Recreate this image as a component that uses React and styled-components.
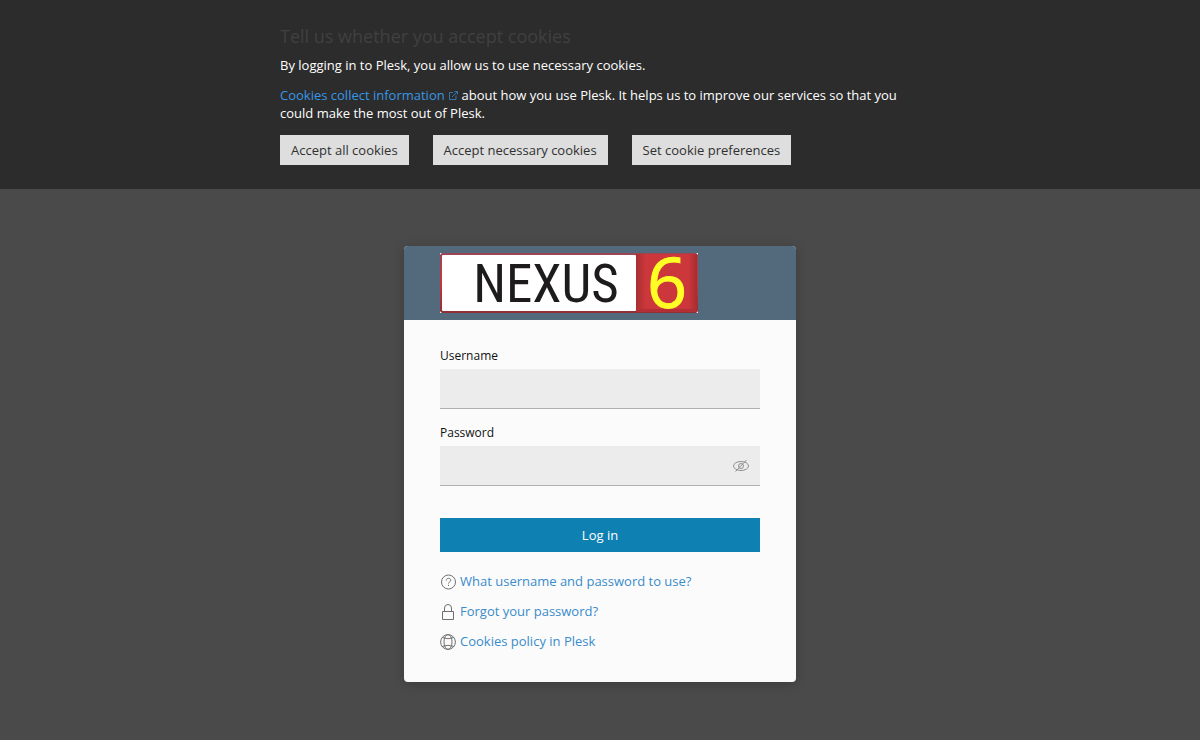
import React, { useState } from 'react';
import styled, { createGlobalStyle } from 'styled-components';

const GlobalStyle = createGlobalStyle`
  *, *::before, *::after { box-sizing: border-box; }
  body {
    margin: 0;
    background: #4a4a4a;
    color: #222;
    font: 13px/18px 'Open Sans', 'Noto Sans', sans-serif;
  }
`;

const Page = styled.div`
  min-height: 100vh;
  display: flex;
  flex-direction: column;
`;

const Banner = styled.section`
  padding: 24px;
  background: #2c2c2c;
  color: #fff;
`;

const BannerContent = styled.div`
  max-width: 640px;
  margin: 0 auto;
`;

const BannerTitle = styled.h1`
  margin: 0 0 8px;
  color: #404040;
  font-size: 18px;
  font-weight: 400;
  line-height: 24px;
`;

const Paragraph = styled.p`
  margin: 0 0 12px;
`;

const Link = styled.a`
  color: ${({ $bright }) => ($bright ? '#3797e4' : '#3a8bcb')};
  text-decoration: none;
  &:hover { text-decoration: underline; }
`;

const BannerActions = styled.div`
  display: flex;
  flex-wrap: wrap;
  gap: 24px;
  margin-top: 13px;
`;

const CookieButton = styled.button`
  height: 30px;
  padding: 0 11px;
  border: 0;
  background: #dedede;
  color: #303030;
  font: inherit;
  cursor: pointer;
`;

const Main = styled.main`
  padding: 57px 16px;
  display: flex;
  justify-content: center;
`;

const Card = styled.div`
  width: 100%;
  max-width: 392px;
  border-radius: 4px;
  overflow: hidden;
  background: #fbfbfb;
  box-shadow: 0 2px 12px rgba(0, 0, 0, 0.2);
`;

const CardHeader = styled.header`
  padding: 7px 36px;
  background: #53697c;
`;

const Logo = styled.svg`
  display: block;
  width: 258px;
  height: 60px;
  overflow: visible;
`;

const Form = styled.form`
  padding: 27px 36px 0;
`;

const Field = styled.div`
  margin-bottom: 15px;
`;

const Label = styled.label`
  display: block;
  margin-bottom: 4px;
  color: #111;
  font-size: 12px;
`;

const InputBox = styled.div`
  display: flex;
  align-items: center;
  height: 40px;
  border-bottom: 1px solid #b0b0b0;
  background: #ececec;
  &:focus-within { border-color: #0f80b2; }
`;

const Input = styled.input`
  flex: 1;
  min-width: 0;
  height: 100%;
  padding: 0 12px;
  border: 0;
  outline: 0;
  background: transparent;
  font: inherit;
`;

const RevealButton = styled.button`
  display: flex;
  padding: 0;
  margin-right: 11px;
  border: 0;
  background: transparent;
  color: #909090;
  cursor: pointer;
`;

const SubmitButton = styled.button`
  width: 100%;
  height: 34px;
  margin-top: 17px;
  border: 0;
  background: #0f80b2;
  color: #fff;
  font: inherit;
  font-weight: 500;
  cursor: pointer;
`;

const HelpList = styled.ul`
  margin: 0;
  padding: 20px 36px 32px;
  display: flex;
  flex-direction: column;
  gap: 12px;
  list-style: none;
`;

const HelpItem = styled.li`
  display: flex;
  align-items: center;
  gap: 4px;
`;

const HelpIcon = styled.svg`
  flex: none;
  width: 16px;
  height: 16px;
  margin-top: 2px;
  fill: none;
  stroke: #707070;
`;

function NexusLogo() {
  return (
    <Logo viewBox="0 0 258 60" role="img" aria-label="Nexus 6">
      <defs>
        <linearGradient id="frame" x1="0" y1="0" x2="0" y2="1">
          <stop offset="0" stopColor="#9c4454" />
          <stop offset="0.5" stopColor="#c5363d" />
          <stop offset="1" stopColor="#8d3036" />
        </linearGradient>
        <linearGradient id="panel">
          <stop offset="0" stopColor="#a82f31" />
          <stop offset="0.16" stopColor="#cb373b" />
          <stop offset="0.86" stopColor="#cb373b" />
          <stop offset="1" stopColor="#a62d30" />
        </linearGradient>
      </defs>
      <path d="M0 0h2v1H1v1H0zM256 0h2v2h-1V1h-1zM0 58h1v1h1v1H0zM257 58h1v2h-2v-1h1z" fill="#fff" />
      <rect x="0" y="0" width="258" height="60" rx="3" fill="url(#frame)" />
      <rect x="2" y="2" width="194" height="56" rx="1" fill="#fff" />
      <path d="M196 1h61v57l-1 1h-60z" fill="url(#panel)" />
      <path d="M196 56h61v2l-1 1h-60z" fill="#b23035" />
      <text x="106" y="49" textAnchor="middle" fill="#1d1b1c" fontFamily="'Roboto Condensed', 'DejaVu Sans Condensed', sans-serif" fontSize="53">NEXUS</text>
      <text x="227" y="55" textAnchor="middle" fill="#ffff26" stroke="#ffff26" fontFamily="'Open Sans', sans-serif" fontSize="70">6</text>
    </Logo>
  );
}

function ExternalIcon() {
  return (
    <svg width="10" height="10" viewBox="0 0 10 10" fill="none" stroke="currentColor" strokeWidth="0.7" aria-hidden="true">
      <path d="M5 2.500H1.500v7h6.500V5.500M4 7l5-5M6.500 1.500h3v3" />
    </svg>
  );
}

function EyeOffIcon() {
  return (
    <svg width="16" height="16" viewBox="0 0 16 16" fill="none" stroke="currentColor" aria-hidden="true">
      <ellipse cx="8" cy="8" rx="7.500" ry="4.500" />
      <circle cx="8" cy="8" r="2.500" />
      <path d="M2.500 13.500l11-11.500" />
    </svg>
  );
}

function QuestionIcon() {
  return (
    <HelpIcon viewBox="0 0 16 16" aria-hidden="true">
      <circle cx="8.500" cy="8" r="7" />
      <path d="M6.300 6.500C6.300 5 7.200 4.300 8.500 4.300s2.200.8 2.200 2C10.700 7.900 8.500 7.900 8.500 9.500M8.500 10.800v1.200" />
    </HelpIcon>
  );
}

function LockIcon() {
  return (
    <HelpIcon viewBox="0 0 16 16" aria-hidden="true">
      <path d="M2.500 7.500h11v8h-11zM4.500 7.500V4a3.500 3.500 0 0 1 7 0v3.500" />
    </HelpIcon>
  );
}

function GlobeIcon() {
  return (
    <HelpIcon viewBox="0 0 16 16" aria-hidden="true">
      <circle cx="8" cy="8" r="7.400" />
      <ellipse cx="8" cy="8" rx="4" ry="7.400" />
      <path d="M2 3.500q6 2.500 12 0M2 12.500q6-2.500 12 0" />
    </HelpIcon>
  );
}

const cookieActions = ['Accept all cookies', 'Accept necessary cookies', 'Set cookie preferences'];

const helpLinks = [
  { label: 'What username and password to use?', Icon: QuestionIcon },
  { label: 'Forgot your password?', Icon: LockIcon },
  { label: 'Cookies policy in Plesk', Icon: GlobeIcon },
];

export default function App() {
  const [revealed, setRevealed] = useState(false);

  return (
    <Page>
      <GlobalStyle />
      <Banner>
        <BannerContent>
          <BannerTitle>Tell us whether you accept cookies</BannerTitle>
          <Paragraph>By logging in to Plesk, you allow us to use necessary cookies.</Paragraph>
          <Paragraph>
            <Link href="#cookies" $bright>Cookies collect information <ExternalIcon /></Link>
            {' '}about how you use Plesk. It helps us to improve our services so that you could make the most out of Plesk.
          </Paragraph>
          <BannerActions>
            {cookieActions.map((label) => (
              <CookieButton key={label} type="button">{label}</CookieButton>
            ))}
          </BannerActions>
        </BannerContent>
      </Banner>
      <Main>
        <Card>
          <CardHeader><NexusLogo /></CardHeader>
          <Form onSubmit={(event) => event.preventDefault()}>
            <Field>
              <Label htmlFor="username">Username</Label>
              <InputBox><Input id="username" type="text" autoComplete="username" /></InputBox>
            </Field>
            <Field>
              <Label htmlFor="password">Password</Label>
              <InputBox>
                <Input id="password" type={revealed ? 'text' : 'password'} autoComplete="current-password" />
                <RevealButton type="button" aria-label="Show password" onClick={() => setRevealed(!revealed)}>
                  <EyeOffIcon />
                </RevealButton>
              </InputBox>
            </Field>
            <SubmitButton type="submit">Log in</SubmitButton>
          </Form>
          <HelpList>
            {helpLinks.map(({ label, Icon }) => (
              <HelpItem key={label}>
                <Icon />
                <Link href="#help">{label}</Link>
              </HelpItem>
            ))}
          </HelpList>
        </Card>
      </Main>
    </Page>
  );
}
